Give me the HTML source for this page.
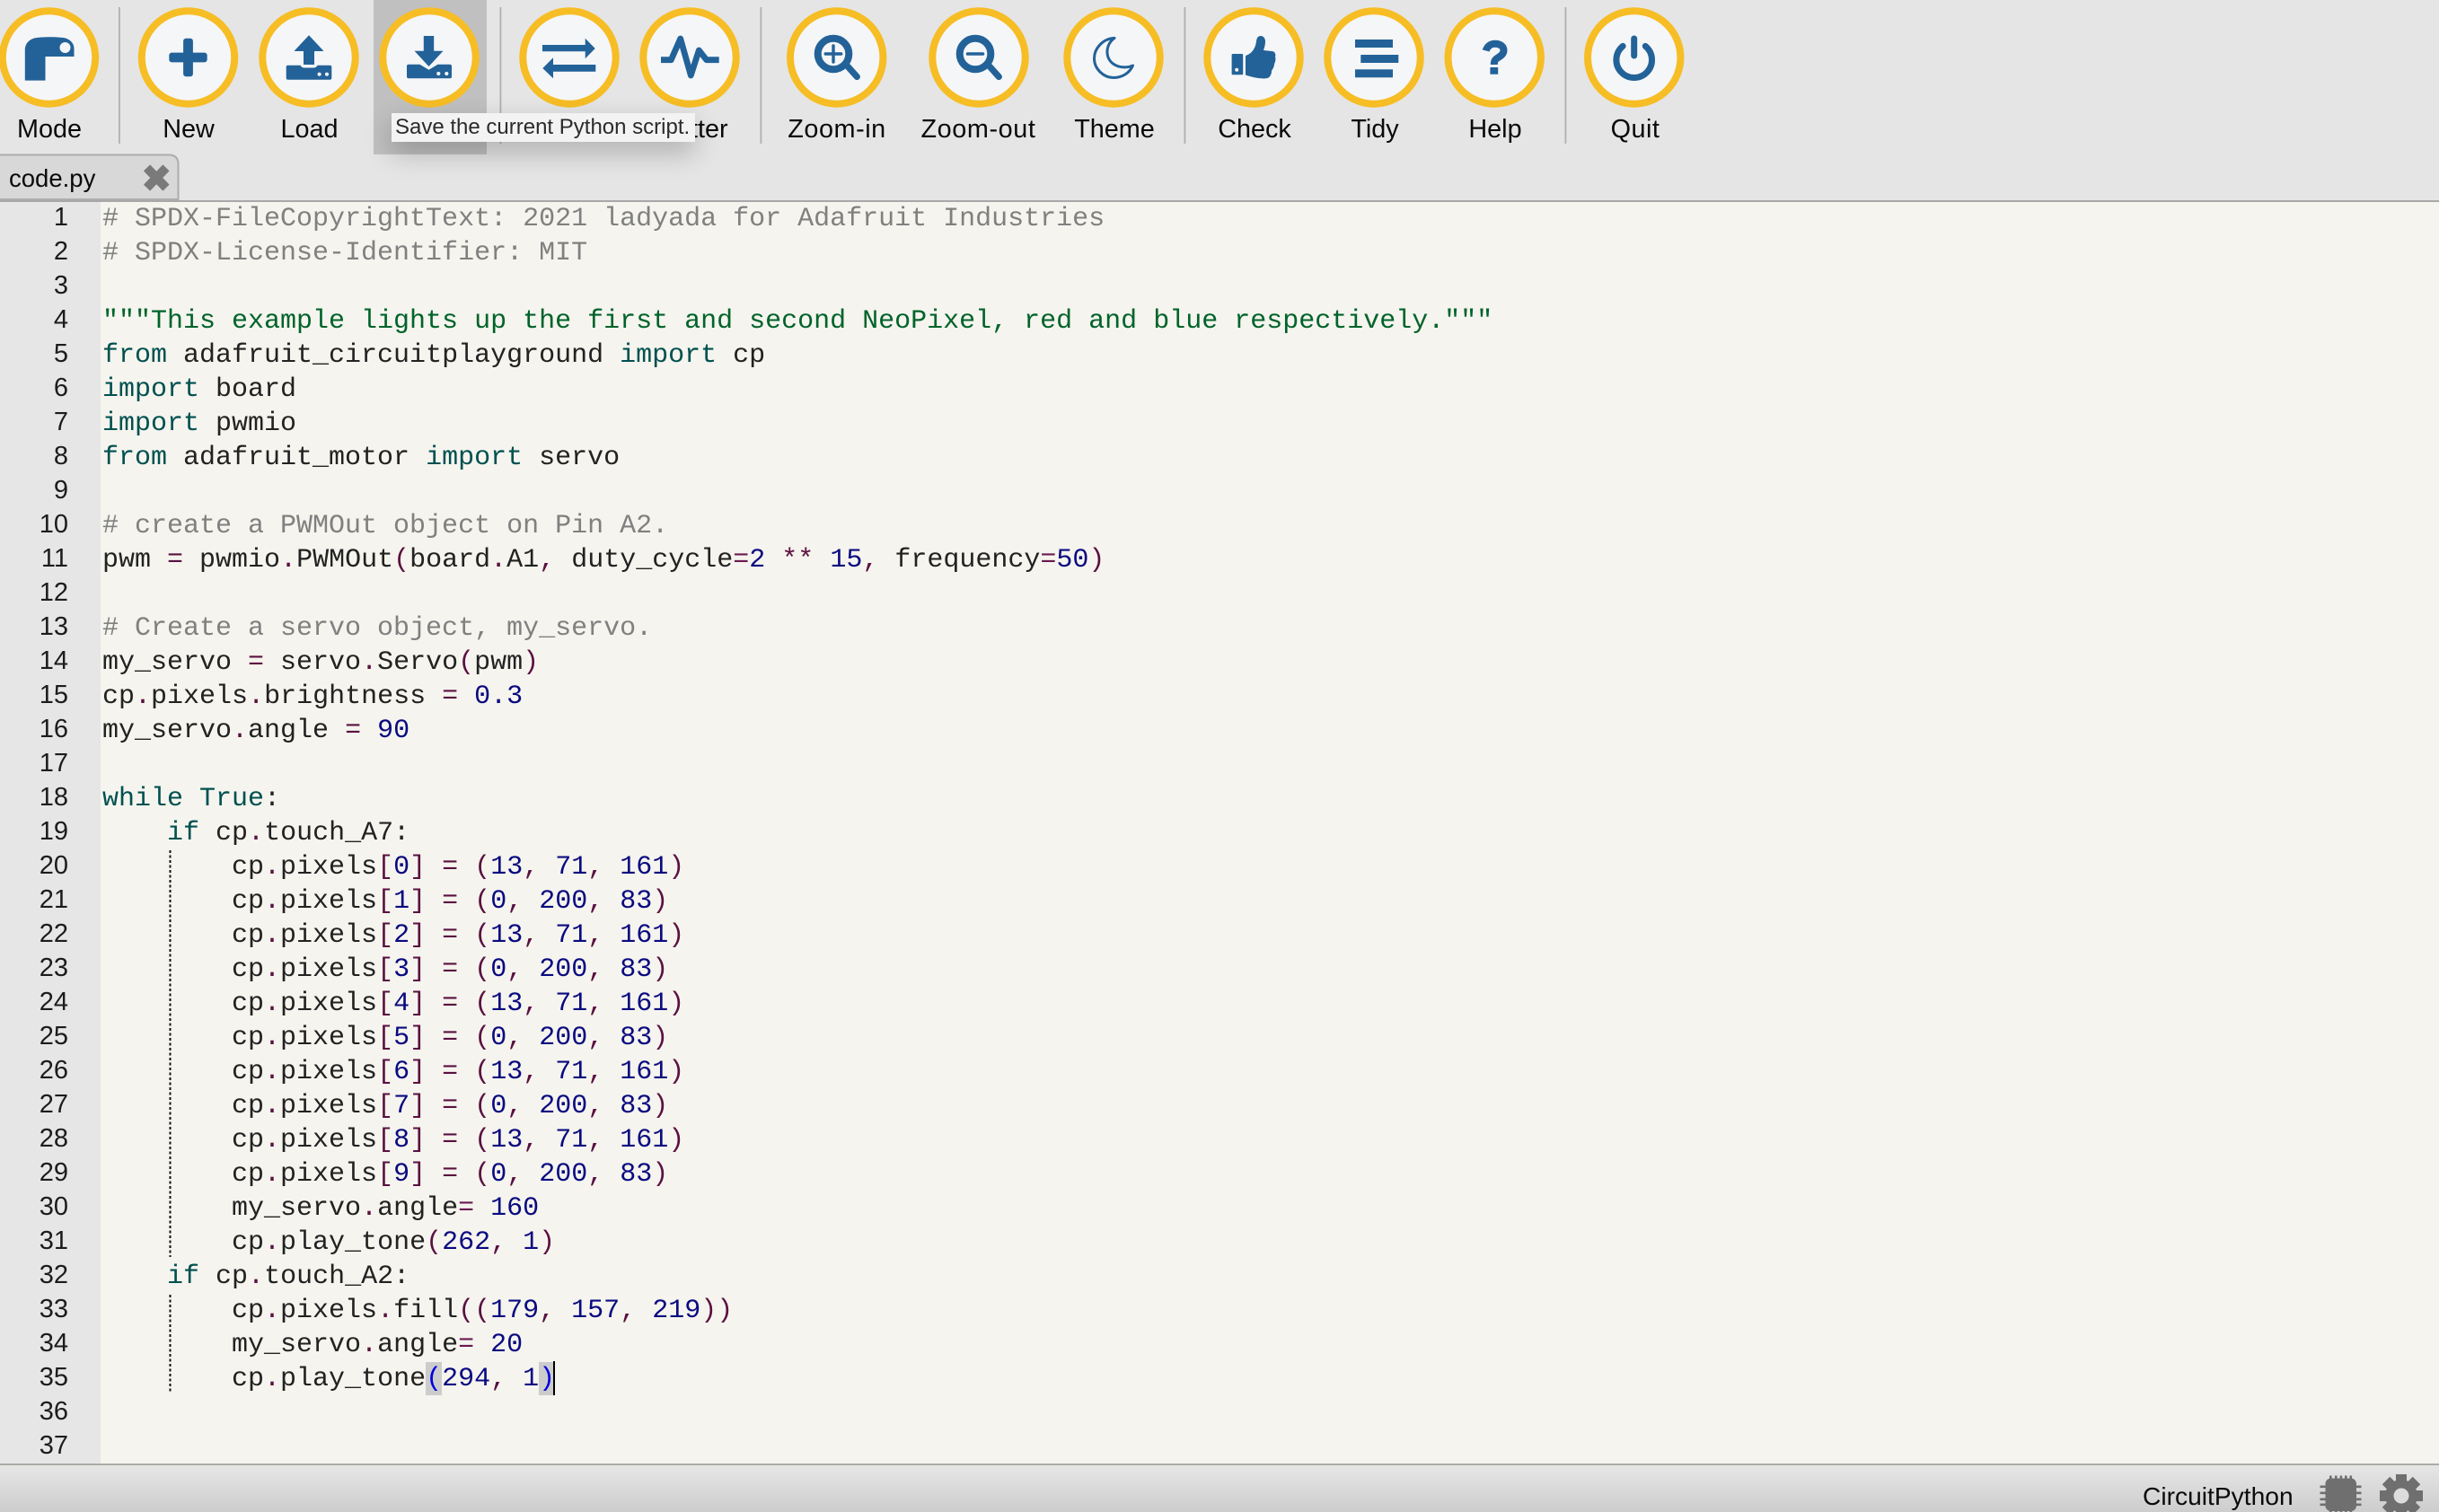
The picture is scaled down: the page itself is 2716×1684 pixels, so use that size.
<!DOCTYPE html>
<html lang="en">
<head>
<meta charset="utf-8">
<title>Mu code.py</title>
<style>
html,body{margin:0;padding:0;width:2716px;height:1684px;overflow:hidden;background:#e5e5e5}
#root{position:relative;width:2716px;height:1684px;overflow:hidden;font-family:"Liberation Sans",sans-serif}
.abs{position:absolute}
#editor{left:0;top:224px;width:2716px;height:1406px;background:#f5f4ee}
#gutter{left:0;top:224px;width:112px;height:1406px;background:#e6e6e6}
#nums{left:0;top:222.7px;width:76px;text-align:right;font:29px/38px "Liberation Sans",sans-serif;color:#1c1c1c;white-space:pre;margin:0}
#code{left:114px;top:225px;margin:0;font:30px/38px "Liberation Mono",monospace;color:#222;white-space:pre}
.c{color:#808080}.s{color:#00632a}.k{color:#005050}.n{color:#0a0a80}.o{color:#5a1040}.e{color:#6a1a50}.b{color:#0000e0}
#tip{left:436px;top:126px;width:338px;height:32px;background:#f3f3f3;box-shadow:0 12px 30px rgba(0,0,0,.24);font-size:24px;line-height:32px;color:#2b2b2b;white-space:pre;text-indent:4px}
#status{left:0;top:1632px;width:2716px;height:52px;background:linear-gradient(#e6e6e6,#cdcdcd)}
svg{position:absolute;left:0;top:0}
</style>
</head>
<body>
<div id="root">
<div class="abs" id="editor"></div>
<div class="abs" id="gutter"></div>
<div class="abs" style="left:0;top:222.5px;width:2716px;height:2px;background:#a8a8a8"></div>
<div class="abs" style="left:0;top:1630px;width:2716px;height:2px;background:#ababa6"></div>
<div class="abs" id="status"></div>
<div class="abs" style="left:474px;top:1517px;width:18px;height:37px;background:#cccccc"></div>
<div class="abs" style="left:600px;top:1517px;width:17px;height:37px;background:#cccccc"></div>
<div class="abs" style="left:616px;top:1516px;width:2px;height:38px;background:#000"></div>

<pre class="abs" id="nums">1
2
3
4
5
6
7
8
9
10
11
12
13
14
15
16
17
18
19
20
21
22
23
24
25
26
27
28
29
30
31
32
33
34
35
36
37</pre>

<pre class="abs" id="code"><span class="c"># SPDX-FileCopyrightText: 2021 ladyada for Adafruit Industries</span>
<span class="c"># SPDX-License-Identifier: MIT</span>

<span class="s">"""This example lights up the first and second NeoPixel, red and blue respectively."""</span>
<span class="k">from</span> adafruit_circuitplayground <span class="k">import</span> cp
<span class="k">import</span> board
<span class="k">import</span> pwmio
<span class="k">from</span> adafruit_motor <span class="k">import</span> servo

<span class="c"># create a PWMOut object on Pin A2.</span>
pwm <span class="o">=</span> pwmio<span class="o">.</span>PWMOut<span class="o">(</span>board<span class="o">.</span>A1<span class="o">,</span> duty_cycle<span class="e">=</span><span class="n">2</span> <span class="o">**</span> <span class="n">15</span><span class="o">,</span> frequency<span class="e">=</span><span class="n">50</span><span class="o">)</span>

<span class="c"># Create a servo object, my_servo.</span>
my_servo <span class="o">=</span> servo<span class="o">.</span>Servo<span class="o">(</span>pwm<span class="o">)</span>
cp<span class="o">.</span>pixels<span class="o">.</span>brightness <span class="o">=</span> <span class="n">0.3</span>
my_servo<span class="o">.</span>angle <span class="o">=</span> <span class="n">90</span>

<span class="k">while</span> <span class="k">True</span>:
    <span class="k">if</span> cp<span class="o">.</span>touch_A7:
        cp<span class="o">.</span>pixels<span class="o">[</span><span class="n">0</span><span class="o">]</span> <span class="o">=</span> <span class="o">(</span><span class="n">13</span><span class="o">,</span> <span class="n">71</span><span class="o">,</span> <span class="n">161</span><span class="o">)</span>
        cp<span class="o">.</span>pixels<span class="o">[</span><span class="n">1</span><span class="o">]</span> <span class="o">=</span> <span class="o">(</span><span class="n">0</span><span class="o">,</span> <span class="n">200</span><span class="o">,</span> <span class="n">83</span><span class="o">)</span>
        cp<span class="o">.</span>pixels<span class="o">[</span><span class="n">2</span><span class="o">]</span> <span class="o">=</span> <span class="o">(</span><span class="n">13</span><span class="o">,</span> <span class="n">71</span><span class="o">,</span> <span class="n">161</span><span class="o">)</span>
        cp<span class="o">.</span>pixels<span class="o">[</span><span class="n">3</span><span class="o">]</span> <span class="o">=</span> <span class="o">(</span><span class="n">0</span><span class="o">,</span> <span class="n">200</span><span class="o">,</span> <span class="n">83</span><span class="o">)</span>
        cp<span class="o">.</span>pixels<span class="o">[</span><span class="n">4</span><span class="o">]</span> <span class="o">=</span> <span class="o">(</span><span class="n">13</span><span class="o">,</span> <span class="n">71</span><span class="o">,</span> <span class="n">161</span><span class="o">)</span>
        cp<span class="o">.</span>pixels<span class="o">[</span><span class="n">5</span><span class="o">]</span> <span class="o">=</span> <span class="o">(</span><span class="n">0</span><span class="o">,</span> <span class="n">200</span><span class="o">,</span> <span class="n">83</span><span class="o">)</span>
        cp<span class="o">.</span>pixels<span class="o">[</span><span class="n">6</span><span class="o">]</span> <span class="o">=</span> <span class="o">(</span><span class="n">13</span><span class="o">,</span> <span class="n">71</span><span class="o">,</span> <span class="n">161</span><span class="o">)</span>
        cp<span class="o">.</span>pixels<span class="o">[</span><span class="n">7</span><span class="o">]</span> <span class="o">=</span> <span class="o">(</span><span class="n">0</span><span class="o">,</span> <span class="n">200</span><span class="o">,</span> <span class="n">83</span><span class="o">)</span>
        cp<span class="o">.</span>pixels<span class="o">[</span><span class="n">8</span><span class="o">]</span> <span class="o">=</span> <span class="o">(</span><span class="n">13</span><span class="o">,</span> <span class="n">71</span><span class="o">,</span> <span class="n">161</span><span class="o">)</span>
        cp<span class="o">.</span>pixels<span class="o">[</span><span class="n">9</span><span class="o">]</span> <span class="o">=</span> <span class="o">(</span><span class="n">0</span><span class="o">,</span> <span class="n">200</span><span class="o">,</span> <span class="n">83</span><span class="o">)</span>
        my_servo<span class="o">.</span>angle<span class="e">=</span> <span class="n">160</span>
        cp<span class="o">.</span>play_tone<span class="o">(</span><span class="n">262</span><span class="o">,</span> <span class="n">1</span><span class="o">)</span>
    <span class="k">if</span> cp<span class="o">.</span>touch_A2:
        cp<span class="o">.</span>pixels<span class="o">.</span>fill<span class="o">((</span><span class="n">179</span><span class="o">,</span> <span class="n">157</span><span class="o">,</span> <span class="n">219</span><span class="o">))</span>
        my_servo<span class="o">.</span>angle<span class="e">=</span> <span class="n">20</span>
        cp<span class="o">.</span>play_tone<span class="b">(</span><span class="n">294</span><span class="o">,</span> <span class="n">1</span><span class="b">)</span>
</pre>

<svg width="2716" height="1684" viewBox="0 0 2716 1684" xmlns="http://www.w3.org/2000/svg">
<style>
.ring{fill:#f5f6f8;stroke:#f6bd25;stroke-width:8}
.i{fill:#236298}
.l{fill:none;stroke:#236298}
.lab{font:28.8px "Liberation Sans",sans-serif;fill:#0a0a0a;text-anchor:middle}
</style>
<!-- hover -->
<rect x="416" y="0" width="126" height="172" fill="#c0c0c0"/>
<!-- separators -->
<g fill="#b0b0b0">
<rect x="132" y="8" width="1.8" height="152"/>
<rect x="556.5" y="8" width="1.8" height="152"/>
<rect x="846.5" y="8" width="1.8" height="152"/>
<rect x="1318.5" y="8" width="1.8" height="152"/>
<rect x="1742.5" y="8" width="1.8" height="152"/>
</g>
<!-- rings -->
<g class="ring">
<circle cx="54.5" cy="64" r="51.7"/>
<circle cx="209.5" cy="64" r="51.7"/>
<circle cx="344" cy="64" r="51.7"/>
<circle cx="478" cy="64" r="51.7"/>
<circle cx="634" cy="64" r="51.7"/>
<circle cx="768" cy="64" r="51.7"/>
<circle cx="931.7" cy="64" r="51.7"/>
<circle cx="1090" cy="64" r="51.7"/>
<circle cx="1240" cy="64" r="51.7"/>
<circle cx="1396" cy="64" r="51.7"/>
<circle cx="1530" cy="64" r="51.7"/>
<circle cx="1664.2" cy="64" r="51.7"/>
<circle cx="1819.7" cy="64" r="51.7"/>
</g>
<!-- Mode -->
<g transform="translate(54.5,64)">
<path class="i" d="M-26.7,25.6V-8C-26.7,-17 -20,-22 -11,-22.3C-2,-23 9,-23 16,-22C23,-21 28,-16 28,-10V-1H-4V25.6Z"/>
<circle cx="18" cy="-11" r="6" fill="#f5f6f8"/>
</g>
<!-- New -->
<g transform="translate(209.5,64)"><rect class="i" x="-21.2" y="-5.4" width="42.4" height="10.8" rx="3"/><rect class="i" x="-5.4" y="-21.3" width="10.8" height="42.6" rx="3"/></g>
<!-- Load -->
<g transform="translate(344,64)">
<path class="i" d="M0,-24.7L16,-7.6Q16.5,-7 15,-7H6V8H-6V-7H-15Q-16.5,-7 -16,-7.6Z"/>
<path class="i" d="M-25.3,10.5Q-25.3,8.7 -23.3,8.7H-9.5Q-8,11.5 -5,11.5H5Q8,11.5 9.5,8.7H23.3Q25.3,8.7 25.3,10.5V22.7Q25.3,24.7 23.3,24.7H-23.3Q-25.3,24.7 -25.3,22.7Z"/>
<circle cx="11.6" cy="18.7" r="2.1" fill="#f5f6f8"/><circle cx="20" cy="18.7" r="2.1" fill="#f5f6f8"/>
</g>
<!-- Save -->
<g transform="translate(478,64)">
<path class="i" d="M-6.2,-24H5.2V-7.3H15.5L-0.5,10L-16.5,-7.3H-6.2Z"/>
<path class="i" d="M-25,9.7Q-25,7.7 -23,7.7H-10.5L-0.5,13.7L9.5,7.7H23Q25,7.7 25,9.7V21.3Q25,23.3 23,23.3H-23Q-25,23.3 -25,21.3Z"/>
<circle cx="10.3" cy="18" r="2.1" fill="#f5f6f8"/><circle cx="19.3" cy="18" r="2.1" fill="#f5f6f8"/>
</g>
<!-- Serial -->
<g transform="translate(634,64)">
<path class="i" d="M-30,-14H17.7V-21.3L28.7,-10L17.7,1.3V-6.7H-30Z"/>
<path class="i" d="M29.3,8H-18V0.3L-29.7,12L-18,23.3V15.7H29.3Z"/>
</g>
<!-- Plotter -->
<g transform="translate(768,64)">
<path class="l" stroke-width="6.8" stroke-linejoin="round" d="M-32,2.7H-20.7L-10.3,-21L1.3,20L10.3,-8L18.7,2.7H32.7"/>
</g>
<!-- Zoom-in -->
<g transform="translate(931.7,64)">
<circle class="l" cx="-3.7" cy="-4" r="17.3" stroke-width="8"/>
<path class="l" stroke-width="7.2" stroke-linecap="round" d="M12.3,10L22.6,21.5"/>
<path class="l" stroke-width="3.4" stroke-linecap="round" d="M-12.5,-4H5M-3.7,-13V5"/>
</g>
<!-- Zoom-out -->
<g transform="translate(1090,64)">
<circle class="l" cx="-4" cy="-4" r="17.3" stroke-width="8"/>
<path class="l" stroke-width="7.2" stroke-linecap="round" d="M12,10L22.3,21.5"/>
<path class="l" stroke-width="3.6" stroke-linecap="round" d="M-12.5,-4H4.5"/>
</g>
<!-- Theme -->
<g transform="translate(1240,64)">
<path class="l" stroke-width="3" stroke-linejoin="round" d="M1,-21.6C-12,-21 -21.5,-10 -21.5,1C-21.5,13 -11,22.5 0,22.5C10,22.5 18,17 21.5,9C10,14 -6,9 -7,-5C-7.5,-12 -4,-18 1,-21.6Z"/>
</g>
<!-- Check -->
<g transform="translate(1396,64)">
<path class="i" d="M-24.4,-2.5Q-24.4,-4 -23,-4H-13Q-11.8,-4 -11.8,-2.5V18Q-11.8,19.3 -13,19.3H-23Q-24.4,19.3 -24.4,18Z"/>
<circle cx="-18.8" cy="13.7" r="2" fill="#f5f6f8"/>
<path class="i" d="M-9,-2C-2,-4 2,-10 3,-18C3.5,-22 5,-24 8,-24C11,-24 13,-21 13,-18C13,-14 12,-11 11,-8L20,-7C24,-7 25,-3 24,-1C25,2 24,6 23,7C23,11 21,13 20,15C20,19 18,23 14,23.3C7,24 -2,22 -9,19.5Z"/>
</g>
<!-- Tidy -->
<g transform="translate(1530,64)">
<rect class="i" x="-21" y="-20" width="42" height="9"/>
<rect class="i" x="-14.7" y="-3" width="42" height="9"/>
<rect class="i" x="-21" y="13.3" width="42" height="9"/>
</g>
<!-- Help -->
<g transform="translate(1664.2,64)">
<path class="l" stroke-width="8" d="M-9.5,-7.5C-8,-13 -3.5,-15.3 0.5,-15.3C6,-15.3 10.3,-12.5 10.3,-8C10.3,-3.5 6.5,-1.5 3.5,0.5C1,2 -0.4,3.5 -0.4,8"/>
<rect class="i" x="-4.8" y="11" width="8.8" height="7.7"/>
</g>
<!-- Quit -->
<g transform="translate(1819.7,64)">
<path class="l" stroke-width="7" stroke-linecap="round" d="M-12.6,-12.6A19.8,19.8 0 1 0 12.6,-12.6"/>
<path class="l" stroke-width="7" stroke-linecap="round" d="M0,-21V-2"/>
</g>
<!-- labels -->
<g class="lab">
<text class="lab" x="55" y="153">Mode</text>
<text class="lab" x="210" y="153">New</text>
<text class="lab" x="344.5" y="153">Load</text>
<text class="lab" x="478" y="153">Save</text>
<text class="lab" x="634" y="153">Serial</text>
<text class="lab" x="769" y="153">Plotter</text>
<text class="lab" x="932" y="153" style="letter-spacing:.55px">Zoom-in</text>
<text class="lab" x="1089.5" y="153" style="letter-spacing:.6px">Zoom-out</text>
<text class="lab" x="1241" y="153">Theme</text>
<text class="lab" x="1397" y="153">Check</text>
<text class="lab" x="1531" y="153">Tidy</text>
<text class="lab" x="1665" y="153">Help</text>
<text class="lab" x="1821" y="153" style="letter-spacing:.5px">Quit</text>
</g>
<!-- tab -->
<path d="M-2,172.5H188Q198.5,172.5 198.5,183V222H-2Z" fill="#d8d8d8" stroke="#adadad" stroke-width="2"/>
<text x="10" y="208" style="font:27.5px 'Liberation Sans',sans-serif;fill:#0a0a0a">code.py</text>
<path d="M167,190.5L181.5,205.5M181.5,190.5L167,205.5" stroke="#7a7a7a" stroke-width="10" fill="none" stroke-linecap="square"/>
<!-- indent guides -->
<path d="M189.5,947V1400M189.5,1442V1552" stroke="#111" stroke-width="2" stroke-dasharray="3 2.5" fill="none"/>
<!-- status -->
<text x="2386" y="1676" style="font:28.2px 'Liberation Sans',sans-serif;fill:#0a0a0a">CircuitPython</text>
<g fill="#6f6f6f">
<rect x="2589.5" y="1646.5" width="34.5" height="36.5" rx="6"/>
<path d="M2594,1643.5h2.6v5h-2.6zM2600,1643.5h2.6v5h-2.6zM2605.6,1643.5h2.6v5h-2.6zM2611,1643.5h2.6v5h-2.6zM2616.5,1643.5h2.6v5h-2.6z"/>
<path d="M2594,1682h2.6v2h-2.6zM2600,1682h2.6v2h-2.6zM2605.6,1682h2.6v2h-2.6zM2611,1682h2.6v2h-2.6zM2616.5,1682h2.6v2h-2.6z"/>
<path d="M2583.5,1654.5h7v2.6h-7zM2583.5,1661.5h7v2.6h-7zM2583.5,1668.5h7v2.6h-7zM2583.5,1674.5h7v2.6h-7z"/>
<path d="M2623,1654.5h6.5v2.6h-6.5zM2623,1661.5h6.5v2.6h-6.5zM2623,1668.5h6.5v2.6h-6.5zM2623,1674.5h6.5v2.6h-6.5z"/>
</g>
<g transform="translate(2674,1666)" fill="#6f6f6f">
<circle r="18"/>
<rect x="-6" y="-24" width="12" height="48"/>
<rect x="-6" y="-24" width="12" height="48" transform="rotate(45)"/>
<rect x="-6" y="-24" width="12" height="48" transform="rotate(90)"/>
<rect x="-6" y="-24" width="12" height="48" transform="rotate(135)"/>
<circle r="8.5" fill="#dcdcdc"/>
</g>
</svg>

<div class="abs" id="tip">Save the current Python script.</div>
</div>
</body>
</html>
